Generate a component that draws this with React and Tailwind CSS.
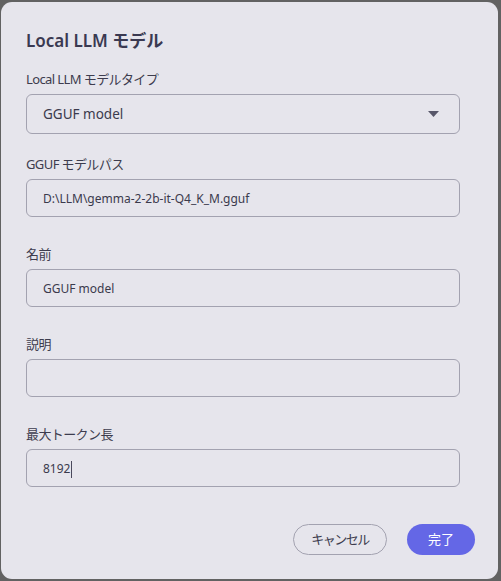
import React from "react";

const font = { fontFamily: '"Noto Sans", "Noto Sans CJK JP", sans-serif' };

function Field({ label, children, gapTop }) {
  return (
    <div className={gapTop}>
      <div className="h-5 text-[13px] leading-5 tracking-[-0.6px] text-[#3d3c4e]">{label}</div>
      {children}
    </div>
  );
}

function TextBox({ value, cursor }) {
  return (
    <div className="mt-[5px] flex h-[38px] w-[434px] items-center rounded-[6px] border border-[#a3a2b0] px-4 pt-[2px] text-[12px] text-[#3b3a4c]">
      <span>{value}</span>
      {cursor && <span className="ml-[1px] inline-block h-[17px] w-px bg-[#4a495c]" />}
    </div>
  );
}

export default function App() {
  return (
    <div className="h-[581px] w-[501px] bg-[#626262] pl-[1px] pt-[2px]" style={font}>
      <div className="flex h-[577px] w-[497px] flex-col rounded-[11px] bg-[#e6e5ec] px-[25px] pt-[27px]">
        <div className="h-6 text-[17px] font-semibold leading-6 text-[#3a3951]">Local LLM モデル</div>
        <Field label="Local LLM モデルタイプ" gapTop="mt-4">
          <div className="mt-[5px] flex h-[40px] w-[434px] items-center justify-between rounded-[6px] border border-[#a3a2b0] px-4 text-[13.5px] text-[#3b3a4c]">
            <span>GGUF model</span>
            <svg width="11" height="6" viewBox="0 0 11 6" className="mr-[4px]">
              <path d="M0 0 L11 0 L5.5 6 Z" fill="#58576a" />
            </svg>
          </div>
        </Field>
        <Field label="GGUF モデルパス" gapTop="mt-[20px]">
          <TextBox value="D:\LLM\gemma-2-2b-it-Q4_K_M.gguf" />
        </Field>
        <Field label="名前" gapTop="mt-[27px]">
          <TextBox value="GGUF model" />
        </Field>
        <Field label="説明" gapTop="mt-[27px]">
          <TextBox value="" />
        </Field>
        <Field label="最大トークン長" gapTop="mt-[27px]">
          <TextBox value="8192" cursor />
        </Field>
        <div className="-mr-[2px] mt-[37px] flex justify-end gap-[20px]">
          <button className="flex h-[31px] w-[94px] items-center justify-center rounded-full border border-[#a3a2b0] text-[13px] tracking-[-1.5px] text-[#3d3c4e]">
            キャンセル
          </button>
          <button className="flex h-[31px] w-[68px] items-center justify-center rounded-full bg-[#6467e6] text-[13px] text-white">
            完了
          </button>
        </div>
      </div>
    </div>
  );
}
